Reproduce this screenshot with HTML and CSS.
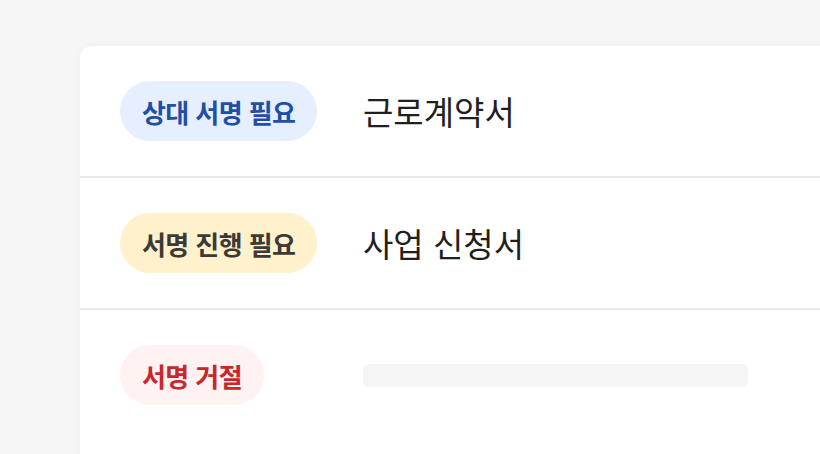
FILE: index.html
```html
<!DOCTYPE html>
<html lang="ko">
<head>
<meta charset="utf-8">
<link rel="stylesheet" href="styles.css">
</head>
<body>
<div class="card">
  <div class="row">
    <div class="cell"><span class="badge badge-blue">상대 서명 필요</span></div>
    <div class="title">근로계약서</div>
  </div>
  <div class="row">
    <div class="cell"><span class="badge badge-yellow">서명 진행 필요</span></div>
    <div class="title">사업 신청서</div>
  </div>
  <div class="row row-last">
    <div class="cell"><span class="badge badge-red">서명 거절</span></div>
    <div class="skeleton"></div>
  </div>
</div>
</body>
</html>
```
FILE: styles.css
```css
html, body {
  margin: 0;
  padding: 0;
  background: #f5f5f5;
  overflow: hidden;
}
body {
  font-family: "Noto Sans CJK KR", "Noto Sans", sans-serif;
  padding: 46px 0 0 80px;
  height: 454px;
  box-sizing: border-box;
}
.card {
  width: 740px;
  height: 408px;
  background: #ffffff;
  border-top-left-radius: 12px;
  box-shadow: 0 0 8px rgba(0, 0, 0, 0.03);
}
.row {
  display: grid;
  grid-template-columns: 243px 1fr;
  align-items: center;
  height: 130px;
  padding-left: 40px;
  border-bottom: 2px solid #e8e8e8;
}
.row-last {
  border-bottom: none;
}
.cell {
  display: flex;
}
.badge {
  display: inline-flex;
  align-items: center;
  height: 60px;
  padding: 0 22px;
  border-radius: 30px;
  font-size: 26px;
  font-weight: 700;
  letter-spacing: -0.6px;
}
.badge-blue {
  background: #e6efff;
  color: #1f4fa6;
}
.badge-yellow {
  background: #fff1cc;
  color: #3b3a37;
}
.badge-red {
  background: #fff2f2;
  color: #c8272b;
}
.title {
  font-size: 33px;
  font-weight: 400;
  color: #1f1f1f;
}
.skeleton {
  width: 385px;
  height: 23px;
  background: #f5f5f5;
  border-radius: 6px;
}
```
